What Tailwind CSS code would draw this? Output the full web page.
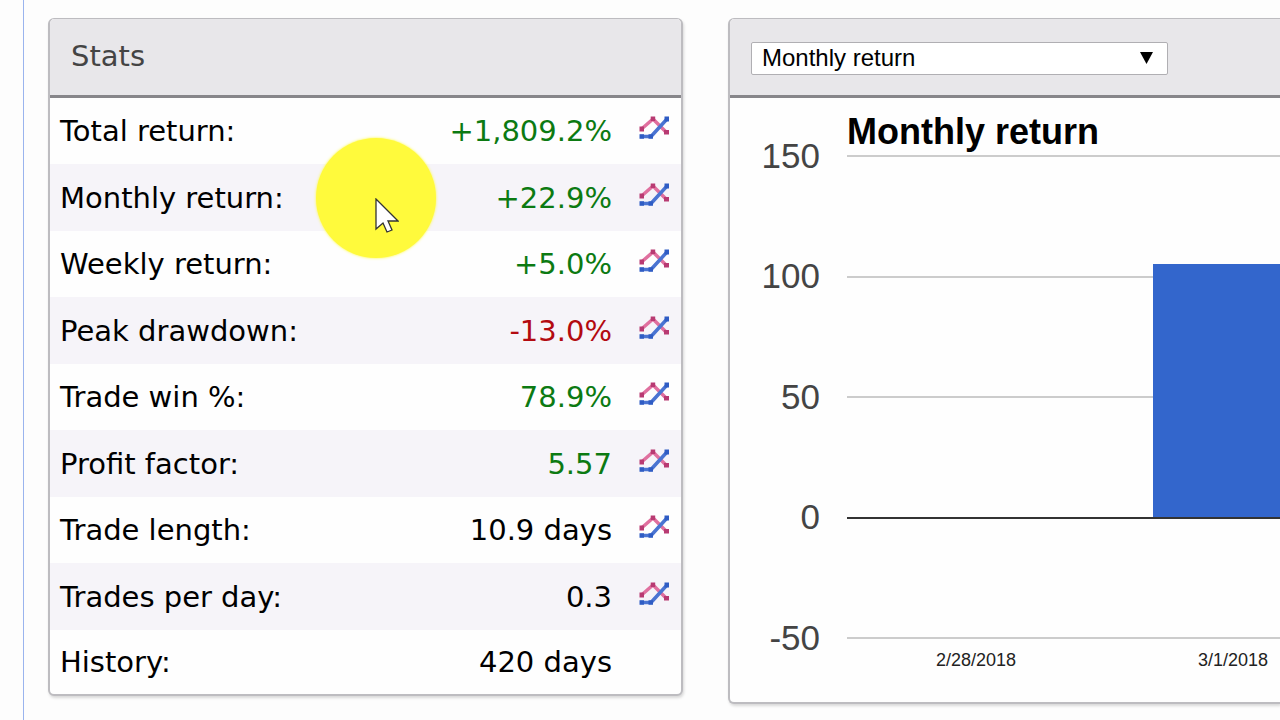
<!DOCTYPE html>
<html lang="en">
<head>
<meta charset="utf-8">
<meta name="viewport" content="width=device-width, initial-scale=1">
<title>Stats</title>
<script src="https://cdn.jsdelivr.net/npm/@tailwindcss/browser@4"></script>
</head>
<body class="relative overflow-hidden bg-[#fdfdfd] text-black">
<svg class="hidden" aria-hidden="true">
  <symbol id="chart" viewBox="0 0 32 26">
    <g fill="none" stroke-width="3.500" stroke-linejoin="round">
      <path d="M3.500 14 15 4 28 17" stroke="#e0709f"/>
      <path d="M2 21.500H13L29 4" stroke="#4a74d2"/>
    </g>
    <path d="M1.500 11.500h4.500v5H1.500zM12.700 1.500h4.500v4.500h-4.500zM26 15h5v4.500h-5z" fill="#b83a72"/>
    <path d="M1.500 19.200h4.500v4.500H1.500zM10.500 19.200h4.500v4.500h-4.500zM26.500 1.500h4.500v5h-4.500z" fill="#2f5cc4"/>
  </symbol>
</svg>
<main class="ml-[23px] flex min-h-screen items-start border-l border-[#9ab4ee] pt-[18px] pl-6">
  <section class="w-[635px] shrink-0 overflow-hidden rounded-md border-2 border-t border-[#bdbcc0] bg-[#fefefe] shadow-[1px_2px_3px_rgba(0,0,0,0.15)]">
    <h2 class="flex h-[79px] items-center border-b-3 border-[#87868a] bg-[#e8e7ea] pl-[21px] font-['DejaVu_Sans',sans-serif] text-[29px] text-[#444]">Stats</h2>
    <table class="w-full font-['DejaVu_Sans',sans-serif] text-[29px] leading-8">
      <tbody>
        <tr class="h-[66px]"><th scope="row" class="pl-2.5 text-left font-normal">Total return:</th><td class="text-right text-[#0c7a12]">+1,809.2%</td><td class="w-[69px] pl-[26px]"><button aria-label="Chart total return" class="block pb-1.5"><svg class="h-[26px] w-8"><use href="#chart"/></svg></button></td></tr>
        <tr class="h-[67px] bg-[#f6f4f9]"><th scope="row" class="pl-2.5 text-left font-normal">Monthly return:</th><td class="text-right text-[#0c7a12]">+22.9%</td><td class="pl-[26px]"><button aria-label="Chart monthly return" class="block pb-1.5"><svg class="h-[26px] w-8"><use href="#chart"/></svg></button></td></tr>
        <tr class="h-[66px]"><th scope="row" class="pl-2.5 text-left font-normal">Weekly return:</th><td class="text-right text-[#0c7a12]">+5.0%</td><td class="pl-[26px]"><button aria-label="Chart weekly return" class="block pb-1.5"><svg class="h-[26px] w-8"><use href="#chart"/></svg></button></td></tr>
        <tr class="h-[67px] bg-[#f6f4f9]"><th scope="row" class="pl-2.5 text-left font-normal">Peak drawdown:</th><td class="text-right text-[#b30a10]">-13.0%</td><td class="pl-[26px]"><button aria-label="Chart peak drawdown" class="block pb-1.5"><svg class="h-[26px] w-8"><use href="#chart"/></svg></button></td></tr>
        <tr class="h-[66px]"><th scope="row" class="pl-2.5 text-left font-normal">Trade win %:</th><td class="text-right text-[#0c7a12]">78.9%</td><td class="pl-[26px]"><button aria-label="Chart trade win percentage" class="block pb-1.5"><svg class="h-[26px] w-8"><use href="#chart"/></svg></button></td></tr>
        <tr class="h-[67px] bg-[#f6f4f9]"><th scope="row" class="pl-2.5 text-left font-normal">Profit factor:</th><td class="text-right text-[#0c7a12]">5.57</td><td class="pl-[26px]"><button aria-label="Chart profit factor" class="block pb-1.5"><svg class="h-[26px] w-8"><use href="#chart"/></svg></button></td></tr>
        <tr class="h-[66px]"><th scope="row" class="pl-2.5 text-left font-normal">Trade length:</th><td class="text-right">10.9 days</td><td class="pl-[26px]"><button aria-label="Chart trade length" class="block pb-1.5"><svg class="h-[26px] w-8"><use href="#chart"/></svg></button></td></tr>
        <tr class="h-[67px] bg-[#f6f4f9]"><th scope="row" class="pl-2.5 text-left font-normal">Trades per day:</th><td class="text-right">0.3</td><td class="pl-[26px]"><button aria-label="Chart trades per day" class="block pb-1.5"><svg class="h-[26px] w-8"><use href="#chart"/></svg></button></td></tr>
        <tr class="h-16"><th scope="row" class="pl-2.5 text-left font-normal">History:</th><td class="text-right">420 days</td><td></td></tr>
      </tbody>
    </table>
  </section>
  <section class="ml-[45px] min-w-0 flex-1 overflow-hidden rounded-l-md border-2 border-t border-r-0 border-[#bdbcc0] bg-[#fefefe] font-['Liberation_Sans',sans-serif] shadow-[1px_2px_3px_rgba(0,0,0,0.15)]">
    <div class="flex h-[79px] items-center border-b-3 border-[#87868a] bg-[#e8e7ea] pl-[21px]">
      <div class="relative mt-0.5 w-[417px]">
        <select aria-label="Chart type" class="block h-[33px] w-full appearance-none rounded-xs border border-[#b0afb3] bg-white pl-2.5 text-[24px] leading-7">
          <option>Monthly return</option>
        </select>
        <svg class="pointer-events-none absolute top-[10px] right-[15px] h-3 w-[13px]" viewBox="0 0 13 12"><path d="M0 0h13L6.500 12z"/></svg>
      </div>
    </div>
    <svg class="block h-[604px] w-full" role="img" aria-label="Monthly return bar chart">
      <g fill="#cccccc">
        <rect x="117" y="57" width="100%" height="2"/>
        <rect x="117" y="178" width="100%" height="2"/>
        <rect x="117" y="298" width="100%" height="2"/>
        <rect x="117" y="539" width="100%" height="2"/>
      </g>
      <rect x="423" y="166" width="306" height="253" fill="#3366cc"/>
      <rect x="117" y="419" width="100%" height="2" fill="#333333"/>
      <text x="117" y="46" class="text-[36px] font-bold">Monthly return</text>
      <g fill="#444444" text-anchor="end" class="text-[35px]">
        <text x="90" y="70">150</text>
        <text x="90" y="190">100</text>
        <text x="90" y="311">50</text>
        <text x="90" y="431">0</text>
        <text x="90" y="552">-50</text>
      </g>
      <g fill="#222222" text-anchor="middle" class="text-[18px]">
        <text x="246" y="568">2/28/2018</text>
        <text x="503" y="568">3/1/2018</text>
      </g>
    </svg>
  </section>
</main>
<div class="pointer-events-none absolute top-[138px] left-[316px] size-[120px] rounded-full bg-[#fffa3c] shadow-[0_0_3px_#fffa3c]">
  <svg class="absolute top-[60px] left-[59px] h-9 w-6" viewBox="0 0 24 36"><path d="M1 1v30l7-6 4 9 5-2-4-9h10z" fill="#fff" stroke="#333" stroke-width="1.300"/></svg>
</div>
</body>
</html>
